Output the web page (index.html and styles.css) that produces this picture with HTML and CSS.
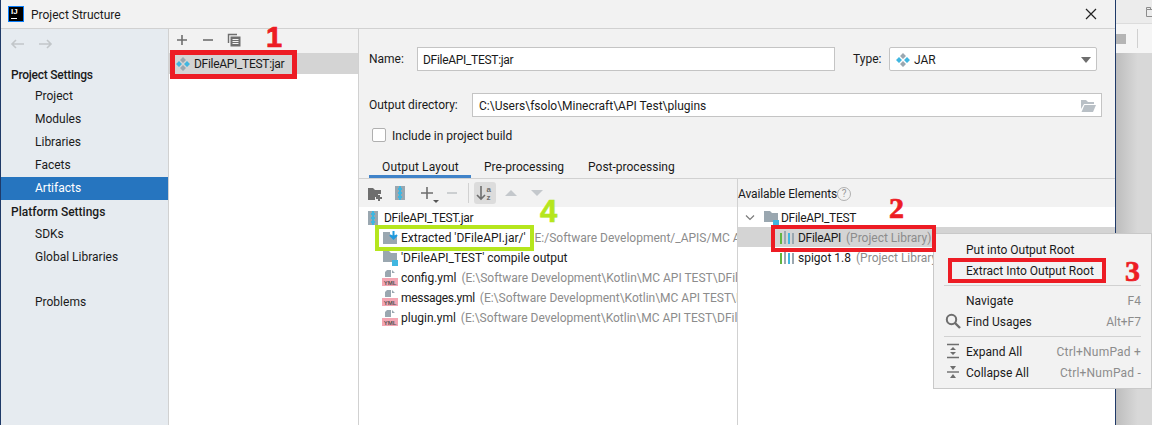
FILE: index.html
```html
<!DOCTYPE html>
<html lang="en">
<head>
<meta charset="utf-8">
<title>Project Structure</title>
<link rel="stylesheet" href="styles.css">
</head>
<body>
<svg class="defs" width="0" height="0">
  <symbol id="artifact" viewBox="0 0 16 16">
    <path fill="#9aa7b0" d="M8 1l3 3-3 3-3-3zM8 9l3 3-3 3-3-3z"/>
    <path fill="#40b6e0" d="M4 5l3 3-3 3-3-3zM12 5l3 3-3 3-3-3z"/>
  </symbol>
  <symbol id="jar" viewBox="0 0 16 16">
    <path fill="#9aa7b0" d="M3 1h10v14H3z"/>
    <path fill="#40b6e0" d="M7 1h2v2H7zM8 3h2v2H8zM6 3h2v2H6zM7 5h2v2H7zM6 7h2v2H6zM8 7h2v2H8zM7 9h2v2H7zM6 11h2v2H6zM8 11h2v2H8zM7 13h2v2H7z"/>
  </symbol>
  <symbol id="module" viewBox="0 0 16 16">
    <path fill="#9aa7b0" d="M1 1h6l2 2h6v9H1z"/>
    <path fill="#40b6e0" d="M10 10h6v6h-6z"/>
  </symbol>
  <symbol id="yml" viewBox="0 0 16 16">
    <path fill="#9aa7b0" d="M5 0h4v7H3V2zM10 0l3 3h-3z"/>
    <path fill="#f4a6b3" d="M0 8h16v8H0z"/>
    <text x="8" y="15" text-anchor="middle" class="yml-text">YML</text>
  </symbol>
  <symbol id="lib" viewBox="0 0 16 16">
    <path fill="#62b543" d="M1 3h2v11H1z"/>
    <path fill="#9aa7b0" d="M5 1h2v13H5zM13 3h2v11h-2z"/>
    <path fill="#40b6e0" d="M9 3h2v11H9z"/>
  </symbol>
  <symbol id="search" viewBox="0 0 16 16">
    <circle cx="6.500" cy="6.500" r="4.700" fill="none" stroke="#6e6e6e" stroke-width="2"/>
    <path d="M10 10l5 5" stroke="#6e6e6e" stroke-width="2.400"/>
  </symbol>
</svg>

<div class="window">
  <header class="titlebar">
    <div class="app-logo"><span class="logo-mark">IJ</span><i class="logo-bar"></i></div>
    <span class="title">Project Structure</span>
    <svg class="close" width="12" height="12" viewBox="0 0 12 12"><path d="M1 1l10 10M11 1L1 11" stroke="#222" stroke-width="1.200"/></svg>
  </header>
  <div class="body">
    <nav class="sidebar">
      <div class="history">
        <svg width="16" height="12" viewBox="0 0 16 12"><path d="M14 6H2M6 2L2 6l4 4" fill="none" stroke="#c2c6c9" stroke-width="1.600"/></svg>
        <svg width="16" height="12" viewBox="0 0 16 12"><path d="M2 6h12M10 2l4 4-4 4" fill="none" stroke="#c2c6c9" stroke-width="1.600"/></svg>
      </div>
      <div class="nav-head first">Project Settings</div>
      <div class="nav-item">Project</div>
      <div class="nav-item">Modules</div>
      <div class="nav-item">Libraries</div>
      <div class="nav-item">Facets</div>
      <div class="nav-item active">Artifacts</div>
      <div class="nav-head second">Platform Settings</div>
      <div class="nav-item">SDKs</div>
      <div class="nav-item">Global Libraries</div>
      <div class="nav-item problems">Problems</div>
    </nav>

    <section class="artifacts">
      <div class="art-toolbar">
        <svg width="14" height="14" viewBox="0 0 14 14"><path d="M7 2v10M2 7h10" stroke="#6e6e6e" stroke-width="1.600"/></svg>
        <svg width="14" height="14" viewBox="0 0 14 14"><path d="M2 7h10" stroke="#6e6e6e" stroke-width="1.600"/></svg>
        <svg width="14" height="14" viewBox="0 0 14 14"><path fill="none" stroke="#6e6e6e" stroke-width="1.400" d="M1.500 10V1.500H10"/><path fill="#6e6e6e" d="M3.500 3.500h10v10h-10z"/><path stroke="#f2f2f2" d="M5.500 6.500h6M5.500 8.500h6M5.500 10.500h6"/></svg>
      </div>
      <div class="art-row">
        <svg class="ico" width="16" height="16"><use href="#artifact"/></svg>
        <span class="tight">DFileAPI_TEST:jar</span>
      </div>
    </section>

    <section class="editor">
      <div class="form">
        <div class="form-row">
          <label class="name-label">Name:</label>
          <div class="field name-field"><span class="tight">DFileAPI_TEST:jar</span></div>
          <label class="type-label">Type:</label>
          <div class="field type-field">
            <svg class="ico" width="16" height="16"><use href="#artifact"/></svg>
            <span>JAR</span>
            <i class="caret"></i>
          </div>
        </div>
        <div class="form-row output-row">
          <label class="out-label">Output directory:</label>
          <div class="field out-field">
            <span>C:\Users\fsolo\Minecraft\API Test\plugins</span>
            <svg width="16" height="14" viewBox="0 0 16 14"><path fill="#b9c0c6" d="M1 1h5l2 2h6v2H4L1 10z"/><path fill="#b9c0c6" d="M4.500 6H16l-3 7H1.500z"/></svg>
          </div>
        </div>
        <div class="check-row">
          <span class="checkbox"></span>
          <span class="check-label">Include in project build</span>
        </div>
      </div>
      <div class="tabs">
        <span class="tab selected">Output Layout</span>
        <span class="tab">Pre-processing</span>
        <span class="tab">Post-processing</span>
      </div>
      <div class="panes">
        <div class="pane left-pane">
          <div class="pane-toolbar tools">
            <svg width="16" height="16" viewBox="0 0 16 16"><path fill="#6e6e6e" d="M1 3h5l2 2h6v4h-3v3H8v3H1z"/><path fill="#6e6e6e" d="M11 10h2v2h2v2h-2v2h-2v-2H9v-2h2z"/></svg>
            <svg width="16" height="16" class="t-jar"><use href="#jar"/></svg>
            <span class="plus-wrap">
              <svg width="14" height="14" viewBox="0 0 14 14"><path d="M7 1v12M1 7h12" stroke="#6e6e6e" stroke-width="1.600"/></svg>
              <i class="mini-caret"></i>
            </span>
            <svg width="12" height="14" viewBox="0 0 12 14" class="t-minus"><path d="M1 7h10" stroke="#c2c6c9" stroke-width="1.600"/></svg>
            <i class="tb-sep"></i>
            <span class="sort-btn">
              <svg width="18" height="16" viewBox="0 0 18 16"><path d="M5 1v13M1 10l4 4 4-4" fill="none" stroke="#6e6e6e" stroke-width="1.600"/><text x="10.500" y="7" class="az">a</text><text x="10.500" y="15" class="az">z</text></svg>
            </span>
            <i class="tri up"></i>
            <i class="tri down"></i>
          </div>
          <div class="tree">
            <div class="row lvl0"><svg class="ico" width="16" height="16"><use href="#jar"/></svg><span class="tight">DFileAPI_TEST.jar</span></div>
            <div class="row lvl1">
              <svg class="ico" width="16" height="16" viewBox="0 0 16 16"><path fill="#9aa7b0" d="M1 2h7v3h7v9H1z"/><path d="M11.500 1v7.500M8 5l3.500 3.500L15 5" fill="none" stroke="#1e9be0" stroke-width="2"/></svg>
              <span>Extracted 'DFileAPI.jar/'</span><span class="muted gap">E:/Software Development/_APIS/MC API</span>
            </div>
            <div class="row lvl1"><svg class="ico" width="16" height="16"><use href="#module"/></svg><span>'DFileAPI_TEST' compile output</span></div>
            <div class="row lvl1"><svg class="ico" width="16" height="16"><use href="#yml"/></svg><span>config.yml</span><span class="muted">(E:\Software Development\Kotlin\MC API TEST\DFileAPI</span></div>
            <div class="row lvl1"><svg class="ico" width="16" height="16"><use href="#yml"/></svg><span class="tight">messages.yml</span><span class="muted">(E:\Software Development\Kotlin\MC API TEST\DFileAPI</span></div>
            <div class="row lvl1"><svg class="ico" width="16" height="16"><use href="#yml"/></svg><span>plugin.yml</span><span class="muted">(E:\Software Development\Kotlin\MC API TEST\DFileAPI</span></div>
          </div>
        </div>
        <div class="pane right-pane">
          <div class="pane-toolbar avail">
            <span class="snug">Available Elements</span><span class="help">?</span>
          </div>
          <div class="tree">
            <div class="row rlvl0">
              <svg width="10" height="8" viewBox="0 0 10 8" class="chev"><path d="M1 1.500l4 4 4-4" fill="none" stroke="#7a7a7a" stroke-width="1.200"/></svg>
              <svg class="ico" width="16" height="16"><use href="#module"/></svg><span class="tight">DFileAPI_TEST</span>
            </div>
            <div class="row rlvl1 sel"><svg class="ico" width="16" height="16"><use href="#lib"/></svg><span class="tight">DFileAPI</span><span class="muted">(Project Library)</span></div>
            <div class="row rlvl1"><svg class="ico" width="16" height="16"><use href="#lib"/></svg><span>spigot 1.8</span><span class="muted">(Project Library)</span></div>
          </div>
        </div>
      </div>
    </section>
  </div>
</div>

<aside class="backdrop">
  <div class="back-strip">
    <svg width="12" height="10" viewBox="0 0 12 10" class="back-folder"><path d="M.500 2.500h11v7H.500zM.500 2.500V.500h4v2" fill="none" stroke="#8c8c8c"/></svg>
  </div>
  <div class="back-top">
    <i class="back-square"></i><i class="back-sep"></i>
  </div>
</aside>

<div class="menu">
  <div class="menu-item"><span class="menu-label">Put into Output Root</span></div>
  <div class="menu-item"><span class="menu-label">Extract Into Output Root</span></div>
  <hr>
  <div class="menu-item"><span class="menu-label">Navigate</span><span class="key">F4</span></div>
  <div class="menu-item">
    <svg class="menu-ico" width="16" height="16"><use href="#search"/></svg>
    <span class="menu-label">Find Usages</span><span class="key">Alt+F7</span>
  </div>
  <hr>
  <div class="menu-item">
    <svg class="menu-ico" width="16" height="16" viewBox="0 0 16 16"><path d="M2 1.500h12M2 14.500h12" stroke="#6e6e6e" stroke-width="1.400"/><path fill="#6e6e6e" d="M8 4l3 3H5zM8 12L5 9h6z"/></svg>
    <span class="menu-label">Expand All</span><span class="key wide">Ctrl+NumPad +</span>
  </div>
  <div class="menu-item">
    <svg class="menu-ico" width="16" height="16" viewBox="0 0 16 16"><path d="M2 8h12" stroke="#6e6e6e" stroke-width="1.400"/><path fill="#6e6e6e" d="M8 6L5 2h6zM8 10l3 4H5z"/></svg>
    <span class="menu-label">Collapse All</span><span class="key wide">Ctrl+NumPad -</span>
  </div>
</div>

<div class="box red box1"></div>
<div class="box red box2"></div>
<div class="box red box3"></div>
<div class="box green box4"></div>
<span class="num num1">1</span>
<span class="num num2">2</span>
<span class="num num3">3</span>
<span class="num num4">4</span>
</body>
</html>
```

FILE: styles.css
```css
* { box-sizing: border-box; }
html, body { margin: 0; padding: 0; }
body {
  width: 1152px;
  height: 425px;
  overflow: hidden;
  position: relative;
  display: flex;
  font-family: Roboto, "Liberation Sans", sans-serif;
  font-size: 12px;
  color: #1a1a1a;
  background: #c9c9c9;
}
.defs { position: absolute; }
.yml-text { font: bold 6px "Liberation Sans", sans-serif; fill: #555; }
.az { font: bold 8px "Liberation Sans", sans-serif; fill: #6e6e6e; }
.ico { flex: none; }
.tight { letter-spacing: -0.3px; }
.snug { letter-spacing: -0.1px; }

.window {
  width: 1116px;
  height: 425px;
  flex: none;
  border-left: 1px solid #1f3a68;
  border-right: 1px solid #1f3a68;
  background: #f2f2f2;
  display: flex;
  flex-direction: column;
}
.titlebar {
  height: 29px;
  flex: none;
  display: flex;
  align-items: center;
  padding-left: 7px;
  border-bottom: 1px solid #d1d1d1;
}
.app-logo {
  width: 16px;
  height: 16px;
  flex: none;
  background: #000;
  border: 1px solid #087cfa;
  margin-right: 7px;
  padding: 1px 0 0 2px;
  display: flex;
  flex-direction: column;
}
.logo-mark { display: block; color: #fff; font: bold 8px/8px "Liberation Sans", sans-serif; }
.logo-bar { display: block; width: 6px; height: 1px; background: #fff; margin-top: 2px; }
.title { font-size: 12px; padding-top: 2px; }
.close { margin-left: auto; margin-right: 18px; }

.body { flex: 1; display: flex; min-height: 0; }

.sidebar {
  width: 168px;
  flex: none;
  background: #e6ebf0;
  border-right: 1px solid #d1d1d1;
}
.history { height: 28px; display: flex; gap: 11px; align-items: center; padding: 2px 0 0 9px; }
.nav-head { height: 21px; line-height: 21px; padding-left: 10px; font-weight: 500; margin-top: 7px; }
.nav-head.first { letter-spacing: -0.25px; line-height: 23px; }
.nav-head.second { margin-top: 2px; }
.nav-item { height: 23px; line-height: 23px; padding-left: 34px; }
.nav-item.active { background: #2675bf; color: #fff; }
.nav-item.problems { margin-top: 22px; }

.artifacts {
  width: 190px;
  flex: none;
  background: #fff;
  border-right: 1px solid #d1d1d1;
}
.art-toolbar {
  height: 24px;
  background: #f2f2f2;
  display: flex;
  align-items: center;
  gap: 12px;
  padding: 0 0 2px 6px;
}
.art-row {
  height: 21px;
  background: #d4d4d4;
  display: flex;
  align-items: center;
  gap: 3px;
  padding-left: 6px;
}

.editor { flex: 1; min-width: 0; display: flex; flex-direction: column; }
.form { height: 129px; flex: none; padding: 18px 0 0 10px; }
.form-row { display: flex; align-items: center; height: 24px; }
.field {
  height: 24px;
  background: #fff;
  border: 1px solid #c4c4c4;
  display: flex;
  align-items: center;
  padding-top: 1px;
}
.name-label { width: 48px; }
.name-field { width: 418px; padding-left: 5px; }
.type-label { margin-left: 18px; width: 36px; }
.type-field { width: 208px; padding-left: 5px; gap: 3px; border-radius: 2px; }
.caret {
  margin-left: auto;
  margin-right: 5px;
  border-left: 5px solid transparent;
  border-right: 5px solid transparent;
  border-top: 6px solid #6e6e6e;
}
.output-row { margin-top: 22px; }
.out-label { width: 103px; }
.out-field { width: 630px; padding: 1px 5px 0 6px; justify-content: space-between; }
.check-row { display: flex; align-items: center; gap: 6px; margin: 11px 0 0 3px; height: 14px; }
.check-label { padding-top: 2px; }
.checkbox { width: 14px; height: 14px; background: #fff; border: 1px solid #b0b0b0; border-radius: 2px; }

.tabs {
  height: 21px;
  flex: none;
  display: flex;
  border-bottom: 1px solid #d1d1d1;
  padding-left: 10px;
}
.tab { padding: 0 12px 0 13px; height: 20px; line-height: 19px; margin-right: -1px; }
.tab.selected { border-bottom: 3px solid #4083c9; width: 102px; margin-right: 0; letter-spacing: 0.15px; }

.panes { flex: 1; display: flex; min-height: 0; }
.pane { display: flex; flex-direction: column; min-width: 0; }
.left-pane { width: 379px; flex: none; border-right: 1px solid #d1d1d1; }
.right-pane { flex: 1; }
.pane-toolbar {
  height: 28px;
  flex: none;
  background: #f2f2f2;
  display: flex;
  align-items: center;
  padding: 0 0 0 8px;
}
.t-jar { margin-left: 9px; }
.plus-wrap { position: relative; display: flex; margin-left: 12px; }
.t-minus { margin-left: 12px; }
.mini-caret {
  position: absolute;
  right: -5px;
  bottom: -3px;
  border-left: 3px solid transparent;
  border-right: 3px solid transparent;
  border-top: 3px solid #555;
}
.tb-sep { width: 1px; height: 20px; background: #d1d1d1; margin-left: 10px; }
.sort-btn {
  width: 22px;
  height: 22px;
  background: #dcdcdc;
  border-radius: 3px;
  display: flex;
  align-items: center;
  justify-content: center;
  margin-left: 5px;
}
.tri { border-left: 6px solid transparent; border-right: 6px solid transparent; }
.tri.up { border-bottom: 6px solid #c4c8cc; margin-left: 9px; }
.tri.down { border-top: 6px solid #c4c8cc; margin-left: 14px; }

.avail { padding: 1px 0 0 0; gap: 0; }
.help {
  width: 14px;
  height: 14px;
  border: 1px solid #b0b0b0;
  border-radius: 50%;
  color: #9a9a9a;
  font-size: 10px;
  line-height: 12px;
  text-align: center;
}

.tree { flex: 1; background: #fff; overflow: hidden; }
.row {
  height: 20px;
  display: flex;
  align-items: center;
  gap: 3px;
  white-space: nowrap;
  overflow: hidden;
  padding-top: 2px;
}
.lvl0 { padding-left: 6px; }
.lvl1 { padding-left: 23px; }
.muted { color: #8c8c8c; margin-left: 2px; }
.muted.gap { margin-left: 6px; }
.rlvl0 { padding-left: 7px; gap: 2px; }
.chev { margin-right: 6px; flex: none; }
.rlvl1 { padding-left: 41px; }
.sel { background: #d4d4d4; }

.backdrop { flex: 1; min-width: 0; background: linear-gradient(90deg, #bdbdbd, #d8d8d8 60%); }
.back-strip {
  height: 24px;
  background: #ececec;
  border-bottom: 1px solid #dcdcdc;
  padding: 7px 0 0 30px;
}
.back-folder { display: block; }
.back-top {
  height: 29px;
  background: #f5f5f5;
  display: flex;
  align-items: flex-start;
  gap: 11px;
  padding-top: 10px;
}
.back-square { width: 10px; height: 10px; background: #b5b5b5; }
.back-sep { width: 1px; height: 19px; background: #d0d0d0; margin-top: -5px; }

.menu {
  position: absolute;
  left: 933px;
  top: 233px;
  width: 219px;
  height: 156px;
  background: #f2f2f2;
  border: 1px solid #c9c9c9;
  padding-top: 5px;
}
.menu-item {
  position: relative;
  height: 21px;
  display: flex;
  align-items: center;
  padding: 0 10px 0 32px;
  justify-content: space-between;
}
.menu-ico { position: absolute; left: 11px; top: 2px; }
.key { color: #8c8c8c; }
.key.wide { letter-spacing: 0.2px; }
.menu hr { border: 0; border-top: 1px solid #d1d1d1; margin: 4px 10px; height: 0; }

.box { position: absolute; border-style: solid; background: transparent; }
.red { border-color: #ed1c24; }
.green { border-color: #b5e61d; }
.box1 { left: 170px; top: 50px; width: 127px; height: 29px; border-width: 5px; }
.box2 { left: 771px; top: 225px; width: 165px; height: 27px; border-width: 4px; }
.box3 { left: 948px; top: 258px; width: 158px; height: 25px; border-width: 4px; }
.box4 { left: 375px; top: 225px; width: 159px; height: 26px; border-width: 4px; }

.num { position: absolute; font-weight: bold; line-height: 1; font-family: "Liberation Serif", serif; -webkit-text-stroke: 0.7px currentColor; }
.num1 { left: 266px; top: 23px; font-size: 29px; color: #ed1c24; font-family: "Liberation Sans", sans-serif; }
.num2 { left: 889px; top: 193px; font-size: 30px; color: #ed1c24; }
.num3 { left: 1125px; top: 256px; font-size: 30px; color: #ed1c24; }
.num4 { left: 540px; top: 196px; font-size: 31px; color: #b5e61d; font-family: "Liberation Sans", sans-serif; }
```
